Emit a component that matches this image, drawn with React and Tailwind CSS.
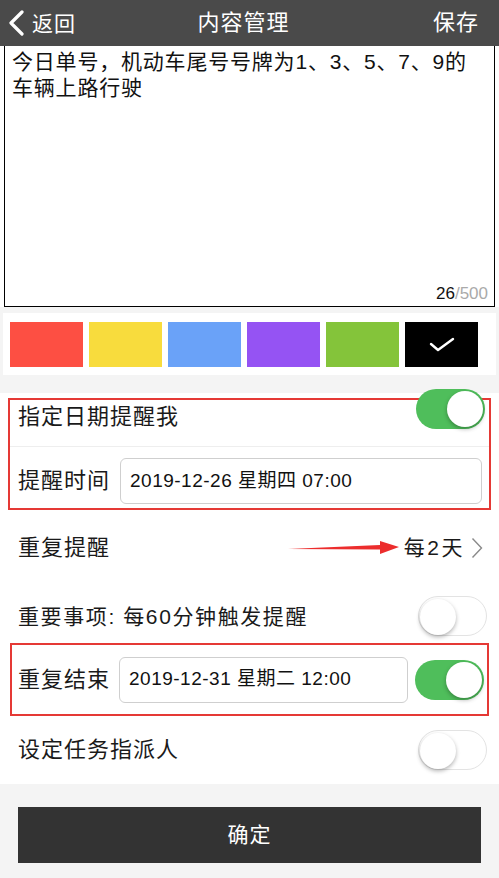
import React, { useState } from "react";

const colors = ["bg-[#fd4f43]", "bg-[#f8dc3d]", "bg-[#6aa2f8]", "bg-[#9553f3]", "bg-[#84c43a]", "bg-black"];

const Toggle = ({ on, onClick }) => (
  <button
    onClick={onClick}
    className={`relative w-[69px] h-[40px] rounded-full shrink-0 transition-colors ${on ? "bg-[#4fbe5b]" : "bg-white border border-[#e3e3e3]"}`}
  >
    <span
      className={`absolute top-[2px] w-[36px] h-[36px] rounded-full bg-white shadow-[0_2px_4px_rgba(0,0,0,0.3)] transition-all ${on ? "left-[31px]" : "left-[1px] top-[1px]"}`}
    />
  </button>
);

const DateInput = ({ value, className }) => (
  <div className={`h-[46px] flex items-center px-[9px] border border-[#cfcfcf] rounded-[6px] bg-white text-[19px] tracking-[0.5px] text-[#111] ${className}`}>
    {value}
  </div>
);

const App = () => {
  const [color, setColor] = useState(5);
  const [remind, setRemind] = useState(true);
  const [important, setImportant] = useState(false);
  const [repeatEnd, setRepeatEnd] = useState(true);
  const [assign, setAssign] = useState(false);

  return (
    <div className="w-[499px] h-[878px] bg-[#f4f4f4] font-['Liberation_Sans','Noto_Sans_CJK_SC',sans-serif] text-[#1a1a1a] overflow-hidden">
      {/* header */}
      <div className="h-[46px] bg-[#4a4a4a] flex items-center justify-between pl-[8px] pr-[20px] text-white">
        <div className="flex items-center gap-[7px] w-[120px]">
          <svg width="17" height="26" viewBox="0 0 17 26" fill="none">
            <path d="M14 2 L3 13 L14 24" stroke="white" strokeWidth="3.2" strokeLinecap="round" strokeLinejoin="round" />
          </svg>
          <span className="text-[21px] leading-none tracking-[1px]">返回</span>
        </div>
        <span className="text-[22px] leading-none tracking-[1px]">内容管理</span>
        <div className="w-[120px] flex justify-end">
          <span className="text-[22px] leading-none tracking-[1px]">保存</span>
        </div>
      </div>

      {/* content */}
      <div className="bg-white px-[4px]">
        <div className="h-[261px] border border-black border-t-0 flex flex-col justify-between pl-[7px] pr-[6px] pt-[3px] pb-[1px]">
          <p className="text-[21px] leading-[26px] tracking-[0.8px] text-[#111]">
            今日单号，机动车尾号号牌为1、3、5、7、9的车辆上路行驶
          </p>
          <div className="self-end text-[17px] leading-[22px]">
            <span className="text-[#111]">26</span>
            <span className="text-[#aaa]">/500</span>
          </div>
        </div>
      </div>

      {/* colors */}
      <div className="pt-[6px] pb-[18px] px-[3px]">
        <div className="bg-white h-[62px] flex items-center gap-[6px] px-[7px]">
          {colors.map((c, i) => (
            <button key={i} onClick={() => setColor(i)} className={`w-[73px] h-[45px] flex items-center justify-center ${c}`}>
              {color === i && (
                <svg width="26" height="16" viewBox="0 0 26 16" fill="none">
                  <path d="M2 8 L9 14 L24 3" stroke="white" strokeWidth="2.4" strokeLinecap="round" strokeLinejoin="round" />
                </svg>
              )}
            </button>
          ))}
        </div>
      </div>

      {/* settings */}
      <div className="bg-white pt-[5px] text-[22px] tracking-[1px]">
        <div className="mx-[8px] border-2 border-[#e53935]">
          <div className="h-[47px] pb-[12px] flex items-center justify-between pl-[8px] pr-[4px] border-b border-[#eeeeee]">
            <span className="leading-none">指定日期提醒我</span>
            <div className="-mt-[8px]">
              <Toggle on={remind} onClick={() => setRemind(!remind)} />
            </div>
          </div>
          <div className="flex items-center gap-[10px] pl-[8px] pr-[7px] pt-[11px] pb-[4px]">
            <span className="leading-none shrink-0">提醒时间</span>
            <DateInput value="2019-12-26 星期四 07:00" className="flex-1" />
          </div>
        </div>

        <div className="h-[75px] flex items-center justify-between pl-[18px] pr-[16px]">
          <span className="leading-none">重复提醒</span>
          <div className="flex items-center">
            <svg width="112" height="16" viewBox="0 0 112 16" className="mr-[4px]">
              <path d="M0 9 L92 5 L92 1 L111 7 L92 14 L92 9.5 Z" fill="#ec2d2d" />
            </svg>
            <span className="leading-none text-[21px] tracking-[2.5px]">每2天</span>
            <svg width="12" height="22" viewBox="0 0 12 22" fill="none" className="ml-[6px]">
              <path d="M1.5 1.5 L10.5 11 L1.5 20.5" stroke="#8a8a8a" strokeWidth="1.4" />
            </svg>
          </div>
        </div>

        <div className="h-[58px] flex items-center justify-between pl-[18px] pr-[12px] pt-[4px]">
          <span className="leading-none text-[21px] tracking-[1.6px]">重要事项: 每60分钟触发提醒</span>
          <Toggle on={important} onClick={() => setImportant(!important)} />
        </div>

        <div className="mx-[10px] border-2 border-[#e53935] h-[73px] flex items-center pl-[6px] pr-[3px]">
          <span className="leading-none shrink-0">重复结束</span>
          <DateInput value="2019-12-31 星期二 12:00" className="flex-1 ml-[9px] mr-[7px]" />
          <Toggle on={repeatEnd} onClick={() => setRepeatEnd(!repeatEnd)} />
        </div>

        <div className="h-[68px] flex items-center justify-between pl-[18px] pr-[12px]">
          <span className="leading-none">设定任务指派人</span>
          <Toggle on={assign} onClick={() => setAssign(!assign)} />
        </div>
      </div>

      {/* footer */}
      <div className="pt-[23px] px-[18px]">
        <button className="w-full h-[56px] bg-[#333333] text-white text-[21px] tracking-[1px] flex items-center justify-center">
          确定
        </button>
      </div>
    </div>
  );
};

export default App;
